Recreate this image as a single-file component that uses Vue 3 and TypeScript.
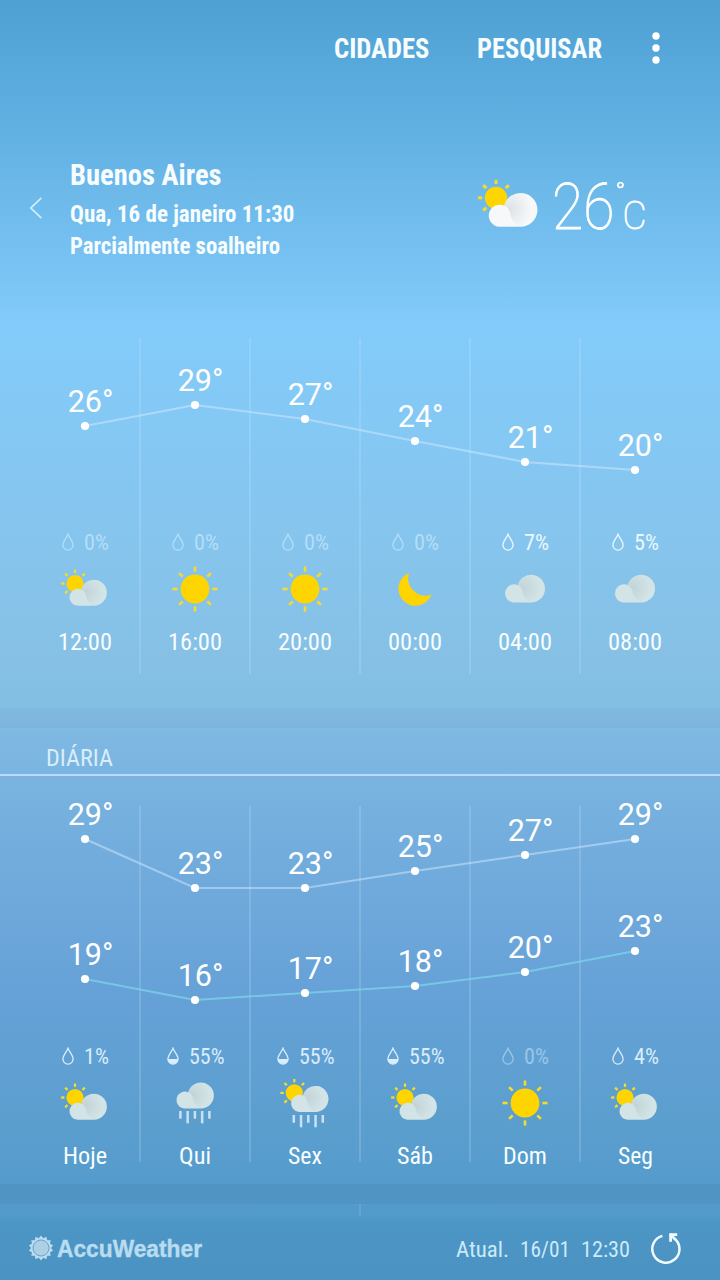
<script setup lang="ts">
import { h, type FunctionalComponent } from 'vue'

// Single line of text fitted to an exact width.
const FitText: FunctionalComponent<{ text: string; w: number; size: number }> = (p) =>
  h('svg', { width: p.w, height: p.size, class: 'fit', style: { overflow: 'visible', display: 'block' } }, [
    h('text', { x: 0, y: p.size * 0.85, 'font-size': p.size, textLength: p.w, lengthAdjust: 'spacingAndGlyphs', fill: 'currentColor' }, p.text),
  ])
FitText.props = ['text', 'w', 'size']

interface Slot { label: string; w: number; rain: number; icon: string }

const columns = [85, 195, 305, 415, 525, 635]
const dividers = [140, 250, 360, 470, 580]

const hourly: Slot[] = [
  { label: '12:00', w: 54, rain: 0, icon: 'partly' },
  { label: '16:00', w: 54, rain: 0, icon: 'sun' },
  { label: '20:00', w: 54, rain: 0, icon: 'sun' },
  { label: '00:00', w: 54, rain: 0, icon: 'moon' },
  { label: '04:00', w: 54, rain: 7, icon: 'cloud' },
  { label: '08:00', w: 54, rain: 5, icon: 'cloud' },
]
const daily: Slot[] = [
  { label: 'Hoje', w: 44, rain: 1, icon: 'partly' },
  { label: 'Qui', w: 32, rain: 55, icon: 'rain' },
  { label: 'Sex', w: 34, rain: 55, icon: 'partlyrain' },
  { label: 'Sáb', w: 36, rain: 55, icon: 'partly' },
  { label: 'Dom', w: 44, rain: 0, icon: 'sun' },
  { label: 'Seg', w: 35, rain: 4, icon: 'partly' },
]

const series = (temps: number[], ys: number[]) => temps.map((t, i) => ({ t, x: columns[i], y: ys[i] }))
const hourlyTemps = series([26, 29, 27, 24, 21, 20], [88, 67, 81, 103, 124, 132])
const highs = series([29, 23, 23, 25, 27, 29], [33, 82, 82, 65, 49, 33])
const lows = series([19, 16, 17, 18, 20, 23], [173, 194, 187, 180, 166, 145])
const line = (s: { x: number; y: number }[]) => s.map((p) => `${p.x},${p.y}`).join(' ')

const sections = [
  { id: 'hourly', slots: hourly, height: 336, chart: 190, lines: [{ kind: 'high', pts: hourlyTemps }] },
  { id: 'daily', slots: daily, height: 356, chart: 236, lines: [{ kind: 'high', pts: highs }, { kind: 'low', pts: lows }] },
]

const rayAngles = [0, 45, 90, 135, 180, 225, 270, 315]
const smallRays = [-135, -90, -45, 0, 45]
const drops = [0, 1, 2, 3, 4]
const gear = Array.from({ length: 28 }, (_, i) => {
  const r = i % 2 ? 10 : 12.4
  const a = (i * Math.PI) / 14
  return `${(13 + r * Math.sin(a)).toFixed(2)},${(13 - r * Math.cos(a)).toFixed(2)}`
}).join(' ')
</script>

<template>
  <main class="screen">
    <svg class="defs" width="0" height="0" aria-hidden="true">
      <defs>
        <radialGradient id="shade" gradientUnits="userSpaceOnUse" cx="30.5" cy="33" r="17">
          <stop offset="0" stop-color="#8a9fa3" stop-opacity="0.24" />
          <stop offset="0.4" stop-color="#8a9fa3" stop-opacity="0.14" />
          <stop offset="1" stop-color="#8a9fa3" stop-opacity="0" />
        </radialGradient>
        <symbol id="cloudshape" viewBox="0 0 60 60">
          <path d="M22.5 46.7A8.5 8.5 0 1 1 26.3 30.4A13 13 0 1 1 39 46.7Z" fill="currentColor" />
          <path d="M26.3 30.4A13 13 0 1 1 39 46.7Q33 44 31 38A8.5 8.5 0 0 0 26.3 30.4Z" fill="url(#shade)" />
        </symbol>
        <symbol id="smallsun" viewBox="0 0 60 60">
          <circle cx="20" cy="24.5" r="8.6" fill="#fed500" />
          <path v-for="a in smallRays" :key="a" d="M20 13.9V10.6" :transform="`rotate(${a} 20 24.5)`" stroke="#f4dc2c" stroke-width="2.3" />
        </symbol>
        <symbol id="drops" viewBox="0 0 60 60">
          <path v-for="d in drops" :key="d" :d="`M${15.4 + d * 7.25} 38V${d % 2 ? 50.3 : 45.7}`" stroke="#c9e2f3" stroke-width="2.5" />
        </symbol>
        <symbol id="partly" viewBox="0 0 60 60">
          <use href="#smallsun" width="60" height="60" />
          <use href="#cloudshape" width="60" height="60" />
        </symbol>
        <symbol id="cloud" viewBox="0 0 60 60">
          <use href="#cloudshape" x="-5.3" y="-6.3" width="64" height="64" />
        </symbol>
        <symbol id="rain" viewBox="0 0 60 60">
          <use href="#cloudshape" x="-3" y="-11.2" width="60" height="60" />
          <use href="#drops" width="60" height="60" />
        </symbol>
        <symbol id="partlyrain" viewBox="0 0 60 60">
          <use href="#smallsun" x="-.7" y="-4.7" width="60" height="60" />
          <use href="#cloudshape" x="1.6" y="-7.8" width="60" height="60" />
          <use href="#drops" x="3.4" y="4" width="60" height="60" />
        </symbol>
        <symbol id="sun" viewBox="0 0 60 60">
          <circle cx="30" cy="30" r="14.4" fill="#fed500" />
          <path v-for="a in rayAngles" :key="a" d="M30 12.6V7.5" :transform="`rotate(${a} 30 30)`" stroke="#f4dc2c" stroke-width="2.6" />
        </symbol>
        <symbol id="moon" viewBox="0 0 60 60">
          <path d="M24 14A17 17 0 1 0 46.5 35.4A17.3 17.3 0 0 1 24 14Z" fill="#fed500" />
        </symbol>
      </defs>
    </svg>

    <header class="bar">
      <FitText text="CIDADES" :w="95.5" :size="27" />
      <FitText text="PESQUISAR" :w="125" :size="27" />
      <svg class="more" width="10" height="34" viewBox="0 0 10 34" fill="#fff">
        <circle cx="5" cy="5" r="3.7" /><circle cx="5" cy="17" r="3.7" /><circle cx="5" cy="29" r="3.7" />
      </svg>
    </header>

    <section class="hero">
      <svg class="back" width="14" height="24" viewBox="0 0 14 24" fill="none" stroke="#d5f2ff" stroke-width="1.7">
        <path d="M12.3 2L1.8 12L12.3 22" />
      </svg>
      <div class="place">
        <FitText class="city" text="Buenos Aires" :w="151.5" :size="29" />
        <FitText class="date" text="Qua, 16 de janeiro 11:30" :w="224.5" :size="23.5" />
        <FitText class="sky" text="Parcialmente soalheiro" :w="210" :size="23.5" />
      </div>
      <svg class="now" width="78" height="78" viewBox="0 0 60 60"><use href="#partly" width="60" height="60" /></svg>
      <svg class="temp" width="100" height="60" viewBox="0 0 100 60" fill="#fff">
        <text x="0" y="51.5" font-size="64" textLength="62.5" lengthAdjust="spacingAndGlyphs">26</text>
        <text x="63.5" y="24" font-size="25">°</text>
        <text x="70.5" y="51.5" font-size="39" textLength="24" lengthAdjust="spacingAndGlyphs">C</text>
      </svg>
    </section>

    <template v-for="s in sections" :key="s.id">
      <div v-if="s.id === 'daily'" class="title">
        <FitText text="DIÁRIA" :w="67" :size="24" />
      </div>
      <section class="forecast" :class="s.id">
        <svg class="chart" width="720" :height="s.chart">
          <path v-for="d in dividers" :key="d" class="divider" :d="`M${d} 0V${s.height}`" />
          <g v-for="l in s.lines" :key="l.kind">
            <polyline :class="l.kind" :points="line(l.pts)" />
            <g v-for="p in l.pts" :key="p.x" fill="#fff">
              <circle :cx="p.x" :cy="p.y" r="4.1" />
              <text :x="p.x - 17.3" :y="p.y - 13.8" font-size="30.5">{{ p.t }}°</text>
            </g>
          </g>
        </svg>
        <div class="slots">
          <div v-for="c in s.slots" :key="c.label" class="slot">
            <div class="chance" :class="{ none: c.rain === 0 }">
              <svg width="12" height="18" viewBox="0 0 12 18">
                <path d="M6 1.2C4.8 4.6 .9 8.3 .9 12A5.1 5.1 0 0 0 11.1 12C11.1 8.3 7.2 4.6 6 1.2Z" fill="none" stroke="currentColor" stroke-width="1.3" />
                <path v-if="c.rain > 50" d="M.9 12A5.1 5.1 0 0 0 11.1 12Z" fill="currentColor" />
              </svg>
              <FitText :text="`${c.rain}%`" :w="c.rain > 9 ? 35.5 : 25" :size="22.5" />
            </div>
            <svg class="icon" width="60" height="60"><use :href="`#${c.icon}`" width="60" height="60" /></svg>
            <FitText :text="c.label" :w="c.w" :size="24.5" />
          </div>
        </div>
      </section>
    </template>

    <div class="notch"></div>
    <footer class="foot">
      <svg width="26" height="26" viewBox="0 0 26 26">
        <polygon :points="gear" fill="#b9dcf1" />
        <circle cx="13" cy="13" r="8" fill="#aed0e5" stroke="#6ba4ca" stroke-width="1" />
      </svg>
      <FitText class="brand" text="AccuWeather" :w="145" :size="23.5" />
      <div class="updated">
        <FitText text="Atual." :w="53" :size="22.5" />
        <FitText text="16/01" :w="50" :size="22.5" />
        <FitText text="12:30" :w="49" :size="22.5" />
      </div>
      <svg class="refresh" width="32" height="34" viewBox="0 0 32 34" fill="none" stroke="#f2fbff">
        <path d="M12.4 3.9A13.6 13.6 0 1 0 23.8 6" stroke-width="2.5" />
        <path d="M20.6 9.8V2.6H27.2" stroke-width="2.8" /><path d="M20 2L25.4 7.6" stroke-width="2.6" />
      </svg>
    </footer>
  </main>
</template>

<style>
body { margin: 0; }
</style>

<style scoped>
.screen {
  width: 720px; height: 1280px; overflow: hidden; display: flex; flex-direction: column;
  color: #f7fdff; font-family: 'Roboto Condensed', Roboto, sans-serif; font-stretch: 75%;
  background:
    linear-gradient(rgba(115, 150, 195, .16), rgba(115, 150, 195, .16)) 0 708px / 720px 20px no-repeat,
    linear-gradient(rgba(50, 100, 145, .12), rgba(50, 100, 145, .12)) 0 1184px / 720px 20px no-repeat,
    linear-gradient(#4ea0d3 0, #58a9dc 70px, #6fbbec 210px, #82cbfa 325px, #84c9f6 400px, #86c4ec 560px, #86c0e5 660px, #82bfe3 708px, #7eb8e2 740px, #77b1df 800px, #6ea8db 910px, #66a1d7 990px, #5c9fcf 1110px, #549bcb 1190px, #539bcb 1215px, #4c96c5 1222px, #4a92c2 1280px);
}
.screen > * { flex-shrink: 0; }
.defs { position: absolute; }
.bar { display: flex; align-items: flex-start; height: 160px; padding: 35px 59px 0 0; box-sizing: border-box; justify-content: flex-end; gap: 47.5px; font-weight: 700; }
.more { margin: -4px 0 0 2px; }
.hero { height: 178px; display: flex; align-items: flex-start; padding-left: 29px; box-sizing: border-box; }
.back { margin-top: 36px; }
.place { width: 402px; padding-left: 27px; box-sizing: border-box; font-weight: 700; flex: none; }
.city { margin-top: 0; }
.date { margin-top: 12.5px; }
.sky { margin-top: 8.5px; }
.now { margin: 6px 0 0 24.5px; flex: none; color: #f7f8fa; }
.temp { margin: 17px 0 0 4.5px; overflow: visible; font-family: Roboto, sans-serif; font-stretch: 100%; font-weight: 100; stroke: #fff; stroke-width: .9; flex: none; }
.forecast { display: flex; flex-direction: column; }
.hourly { height: 370px; }
.daily { height: 398px; padding-top: 30px; box-sizing: border-box; }
.chart { display: block; overflow: visible; flex: none; font-family: Roboto, sans-serif; font-stretch: 100%; }
.chart polyline { fill: none; stroke-width: 2; stroke: rgba(215, 237, 255, .48); }
.chart polyline.low { stroke: rgba(125, 213, 235, .72); }
.divider { stroke: rgba(215, 240, 255, .19); stroke-width: 2; }
.slots { display: grid; grid-template-columns: repeat(6, 110px); padding: 3px 30px 0; }
.slot { display: flex; flex-direction: column; align-items: center; }
.chance { display: flex; gap: 9.5px; align-items: center; height: 22px; padding-left: 1px; color: #eaf8ff; }
.daily .chance { color: #d9edfc; }
.chance.none { color: #b5def8; }
.daily .chance.none { color: #9ac6ea; }
.icon { margin: 6px 0 10px; color: #d3e4e7; }
.title { height: 68px; box-sizing: border-box; padding: 38px 0 0 46px; border-bottom: 2px solid #b8dcf8; color: #d7effc; }
.notch { width: 2px; height: 12px; margin: 30px auto 0; background: rgba(215, 240, 255, .12); }
.foot { display: flex; align-items: center; padding: 0 38px 0 28px; height: 64px; }
.brand { margin: 2px 0 0 3px; font-family: 'Liberation Sans', Arial, sans-serif; font-stretch: 100%; font-weight: 700; color: #b9dcf1; stroke: #b9dcf1; stroke-width: .4; }
.updated { display: flex; gap: 11px; margin: 3px 20px 0 auto; color: #cceafa; }
.refresh { margin-top: 1px; }
</style>
